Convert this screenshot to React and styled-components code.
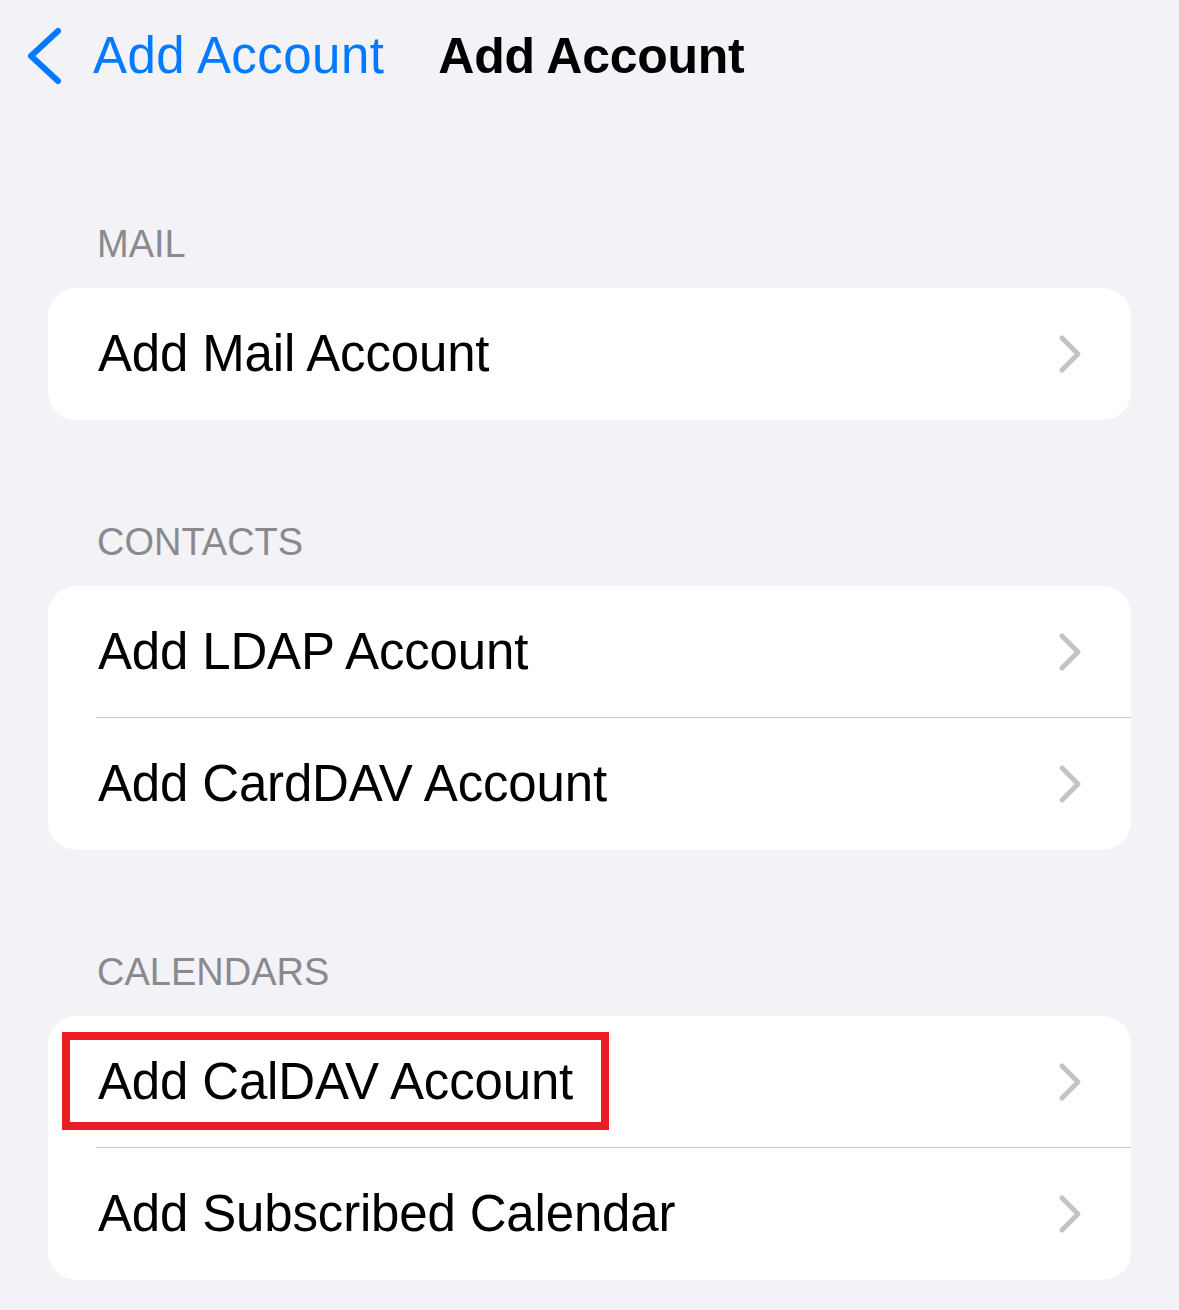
import React from "react";
import styled, { createGlobalStyle } from "styled-components";

const GlobalStyle = createGlobalStyle`
  html, body {
    margin: 0;
    padding: 0;
    background: #f2f2f7;
  }
  body {
    font-family: "Liberation Sans", Arial, sans-serif;
    -webkit-font-smoothing: antialiased;
  }
`;

const Page = styled.div`
  min-height: 100vh;
  background: #f2f2f7;
  box-sizing: border-box;
  padding-bottom: 30px;
`;

const Nav = styled.div`
  display: flex;
  align-items: center;
  height: 60px;
  padding: 26px 0 0 25px;
`;

const BackButton = styled.div`
  display: flex;
  align-items: center;
  gap: 28px;
  color: #007aff;
  font-size: 51px;
  letter-spacing: 0.45px;
  line-height: 60px;
`;

const Title = styled.div`
  margin-left: 54px;
  font-size: 50px;
  font-weight: 700;
  letter-spacing: -0.3px;
  line-height: 60px;
  color: #000;
`;

const Content = styled.div`
  padding: 0 48px;
  margin-top: 136px;
  display: flex;
  flex-direction: column;
  gap: 100px;
`;

const Section = styled.section`
  display: flex;
  flex-direction: column;
  gap: 22px;
`;

const SectionHeader = styled.div`
  padding-left: 49px;
  font-size: 38px;
  line-height: 44px;
  height: 44px;
  color: #8a8a8e;
  text-transform: uppercase;
`;

const Card = styled.div`
  position: relative;
  background: #fff;
  border-radius: 28px;
  overflow: hidden;
`;

const Row = styled.div`
  position: relative;
  display: flex;
  align-items: center;
  justify-content: space-between;
  height: ${(p) => (p.$divider ? 131 : 132)}px;
  padding: 0 47px 0 50px;
  border-bottom: ${(p) => (p.$divider ? "1px solid transparent" : "none")};
  &::after {
    content: "";
    display: ${(p) => (p.$divider ? "block" : "none")};
    position: absolute;
    left: 48px;
    right: 0;
    bottom: -1px;
    height: 1px;
    background: #c6c6c8;
  }
`;

const RowLabel = styled.span`
  font-size: 51px;
  letter-spacing: -0.17px;
  color: #000;
  line-height: 60px;
`;

const Highlight = styled.div`
  position: absolute;
  left: 14px;
  top: 16px;
  width: 547px;
  height: 98px;
  box-sizing: border-box;
  border: 8px solid #ec1c24;
  pointer-events: none;
`;

const BackChevron = () => (
  <svg width="40" height="62" viewBox="0 0 40 62" aria-hidden="true">
    <polyline
      points="33,6 6,31 33,56"
      fill="none"
      stroke="#007aff"
      strokeWidth="6"
      strokeLinecap="round"
      strokeLinejoin="round"
    />
  </svg>
);

const Chevron = () => (
  <svg width="26" height="42" viewBox="0 0 26 42" aria-hidden="true">
    <polyline
      points="4,5 20,21 4,37"
      fill="none"
      stroke="#c4c4c7"
      strokeWidth="5"
      strokeLinecap="round"
      strokeLinejoin="round"
    />
  </svg>
);

const sections = [
  { title: "Mail", rows: ["Add Mail Account"] },
  { title: "Contacts", rows: ["Add LDAP Account", "Add CardDAV Account"] },
  {
    title: "Calendars",
    rows: ["Add CalDAV Account", "Add Subscribed Calendar"],
    highlight: 0,
  },
];

export default function App() {
  return (
    <Page>
      <GlobalStyle />
      <Nav>
        <BackButton>
          <BackChevron />
          <span>Add Account</span>
        </BackButton>
        <Title>Add Account</Title>
      </Nav>
      <Content>
        {sections.map((s) => (
          <Section key={s.title}>
            <SectionHeader>{s.title}</SectionHeader>
            <Card>
              {s.rows.map((r, i) => (
                <Row key={r} $divider={i < s.rows.length - 1}>
                  <RowLabel>{r}</RowLabel>
                  <Chevron />
                  {s.highlight === i && <Highlight />}
                </Row>
              ))}
            </Card>
          </Section>
        ))}
      </Content>
    </Page>
  );
}
